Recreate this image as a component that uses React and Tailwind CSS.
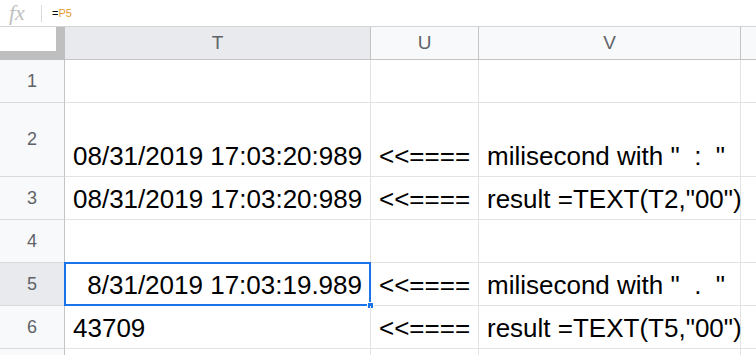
const rows = [
  { n: 1, h: 'h-[43px]', t: '', u: '', v: '' },
  { n: 2, h: 'h-[74px]', t: '08/31/2019 17:03:20:989', u: '<<====', v: 'milisecond with "  :  "' },
  { n: 3, h: 'h-[43px]', t: '08/31/2019 17:03:20:989', u: '<<====', v: 'result =TEXT(T2,"00")' },
  { n: 4, h: 'h-[43px]', t: '', u: '', v: '' },
  { n: 5, h: 'h-[43px]', t: '8/31/2019 17:03:19.989', u: '<<====', v: 'milisecond with "  .  "', selected: true },
  { n: 6, h: 'h-[43px]', t: '43709', u: '<<====', v: 'result =TEXT(T5,"00")' },
  { n: '', h: 'h-[43px]', t: '', u: '', v: '' },
]

function Cell({ w, children, right, className = '' }) {
  return (
    <div
      className={`${w} shrink-0 border-r border-b border-[#e2e3e3] flex items-end ${right ? 'justify-end pr-[8px]' : 'pl-[8px]'} pb-[5px] overflow-visible whitespace-pre text-[26px] leading-[30px] text-black ${className}`}
    >
      {children}
    </div>
  )
}

export default function App() {
  return (
    <div className="w-[756px] h-[355px] overflow-hidden bg-white" style={{ fontFamily: '"Liberation Sans", Arial, sans-serif' }}>
      {/* formula bar */}
      <div className="h-[27px] flex items-center border-b border-[#d4d4d4]">
        <span className="w-[41px] pl-[9px] text-[22px] italic text-[#c0c0c0] leading-none" style={{ fontFamily: '"Liberation Serif", serif' }}>
          fx
        </span>
        <span className="w-px h-[17px] bg-[#dadada]" />
        <span className="pl-[10px] text-[11px] leading-none">
          <span className="text-black">=</span>
          <span className="text-[#e69a2e]">P5</span>
        </span>
      </div>

      {/* column headers */}
      <div className="flex h-[33px] text-[19px] text-[#5f6368]">
        <div className="w-[65px] shrink-0 bg-white border-r-[9px] border-b-[9px] border-[#bfbfbf]" />
        <div className="w-[306px] shrink-0 bg-[#e8eaed] border-r border-b border-[#c4c4c4] flex items-center justify-center">T</div>
        <div className="w-[108px] shrink-0 bg-[#f8f9fa] border-r border-b border-[#c4c4c4] flex items-center justify-center">U</div>
        <div className="w-[262px] shrink-0 bg-[#f8f9fa] border-r border-b border-[#c4c4c4] flex items-center justify-center">V</div>
        <div className="flex-1 bg-[#f8f9fa] border-b border-[#c4c4c4]" />
      </div>

      {rows.map((r, i) => (
        <div key={i} className={`flex ${r.h}`}>
          <div
            className={`w-[65px] shrink-0 border-r border-[#c4c4c4] border-b border-b-[#dadada] flex items-center justify-center text-[18px] text-[#5f6368] ${r.selected ? 'bg-[#e8eaed]' : 'bg-[#f8f9fa]'}`}
          >
            {r.n}
          </div>
          <Cell w="w-[306px]" right={r.selected} className="relative">
            {r.t}
            {r.selected && (
              <>
                <div className="absolute -top-px -left-px -right-px -bottom-px border-2 border-[#1a73e8]" />
                <div className="absolute -right-[4px] -bottom-[4px] w-[7px] h-[7px] bg-[#1a73e8] border border-white" />
              </>
            )}
          </Cell>
          <Cell w="w-[108px]" className="pl-[6px]">{r.u}</Cell>
          <Cell w="w-[262px]" className="pl-[7px]">{r.v}</Cell>
          <div className="flex-1 border-b border-[#e2e3e3]" />
        </div>
      ))}
    </div>
  )
}
